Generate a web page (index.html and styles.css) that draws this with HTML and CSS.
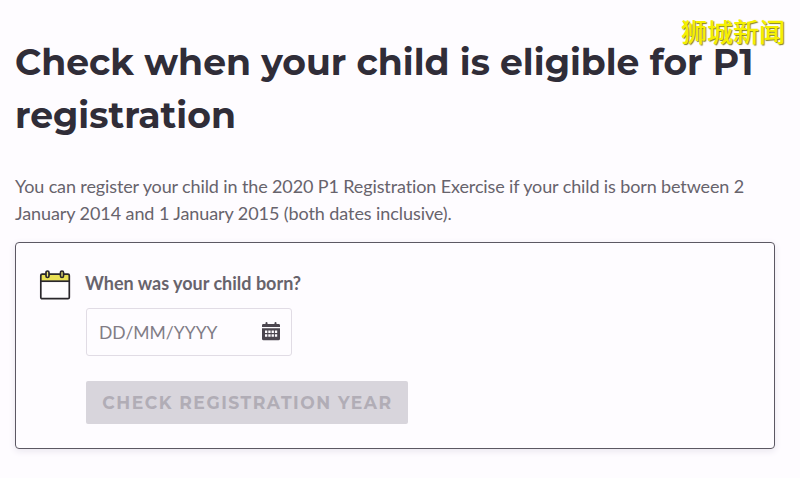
FILE: index.html
```html
<!DOCTYPE html>
<html lang="en">
<head>
<meta charset="utf-8">
<title>P1 registration</title>
<link rel="stylesheet" href="styles.css">
</head>
<body>
<div class="watermark" lang="zh-CN">狮城新闻</div>
<main class="page">
  <h1 class="title">Check when your child is eligible for P1<br>registration</h1>
  <p class="intro"><span class="intro-first">You can register your child in the 2020 P1 Registration Exercise if your child is born between 2</span><br><span class="intro-second">January 2014 and 1 January 2015 (both dates inclusive).</span></p>
  <section class="card">
    <svg class="calendar" width="32" height="32" viewBox="0 0 32 32" fill="none" stroke="#29262b" stroke-width="1.7">
      <path d="M1.800 5.200h28.500v6.700h-28.500z" fill="#e9df54" stroke="none"/>
      <rect x="1.800" y="5.200" width="28.500" height="24.500" rx="1.300"/>
      <path d="M1.800 12.200h28.500"/>
      <rect x="7" y="2" width="3" height="6.500" rx="1.500" fill="#f2ea7b"/>
      <rect x="21.500" y="2" width="3" height="6.500" rx="1.500" fill="#f2ea7b"/>
    </svg>
    <div class="form">
      <label class="question" for="dob">When was your child born?</label>
      <div class="field">
        <input id="dob" class="date" type="text" placeholder="DD/MM/YYYY">
        <svg class="picker" width="18" height="19" viewBox="0 0 18 19" fill="#4b464f">
          <path d="M0 5V3.300Q0 2.100 1.300 2.100H3.500V1Q3.500 0 4.500 0T5.500 1V2.100H12.500V1Q12.500 0 13.500 0T14.500 1V2.100H16.700Q18 2.100 18 3.300V5z"/>
          <path fill-rule="evenodd" d="M0 6.300H18V16.700Q18 18.300 16.400 18.300H1.600Q0 18.300 0 16.700zM3 8.500V11H5.300V8.500zM6.300 8.500V11H8.600V8.500zM9.600 8.500V11H11.900V8.500zM12.900 8.500V11H15.200V8.500zM3 12.200V14.700H5.300V12.200zM6.300 12.200V14.700H8.600V12.200zM9.600 12.200V14.700H11.900V12.200zM12.900 12.200V14.700H15.200V12.200z"/>
        </svg>
      </div>
      <button class="submit" type="button" disabled>CHECK REGISTRATION YEAR</button>
    </div>
  </section>
</main>
</body>
</html>
```
FILE: styles.css
```css
* { box-sizing: border-box; }
body {
  margin: 0;
  height: 478px;
  overflow: hidden;
  background: #fefcff;
  font-family: Lato, sans-serif;
  color: #67636c;
}
.page { padding: 36px 25px 0 15px; }
.title {
  margin: 0;
  font: 700 36.15px/53px Montserrat, Inter, sans-serif;
  color: #302d38;
  white-space: nowrap;
}
.intro {
  margin: 31px 0 0;
  font-size: 18px;
  line-height: 27px;
  white-space: nowrap;
}
.intro-first { letter-spacing: -0.12px; }
.intro-second { letter-spacing: -0.08px; }
.card {
  display: flex;
  gap: 15px;
  height: 207px;
  margin-top: 15px;
  padding: 26px 24px 0 23px;
  border: 1px solid #5c5863;
  border-radius: 4px;
  box-shadow: 0 2px 7px #e9e5ee;
}
.calendar { flex: none; }
.form {
  display: flex;
  flex-direction: column;
  align-items: flex-start;
}
.question {
  margin-left: -1px;
  font-size: 18px;
  font-weight: 700;
  line-height: 28px;
  white-space: nowrap;
}
.field {
  display: flex;
  align-items: center;
  width: 206px;
  height: 48px;
  margin-top: 11px;
  padding: 0 11px 0 12px;
  border: 1px solid #e1dce5;
  border-radius: 3px;
}
.date {
  flex: 1;
  min-width: 0;
  padding: 2px 0 0;
  border: 0;
  outline: 0;
  background: none;
  font: 400 17.5px/26px Lato, sans-serif;
}
.date::placeholder { color: #817c86; opacity: 1; }
.picker { flex: none; margin-bottom: 2px; }
.submit {
  width: 322px;
  height: 43px;
  margin-top: 25px;
  padding: 0 0 0 1px;
  border: 0;
  border-radius: 2px;
  background: #d8d5dc;
  color: #b1adb6;
  font: 700 17.2px/43px Montserrat, Inter, sans-serif;
  letter-spacing: 1.5px;
  white-space: nowrap;
}
.watermark {
  position: absolute;
  left: 681px;
  top: 13px;
  font: 500 26px/36px "Noto Sans CJK SC", sans-serif;
  color: #f5f000;
  text-shadow: 1px 1px 1px #85831c;
  white-space: nowrap;
}
```
